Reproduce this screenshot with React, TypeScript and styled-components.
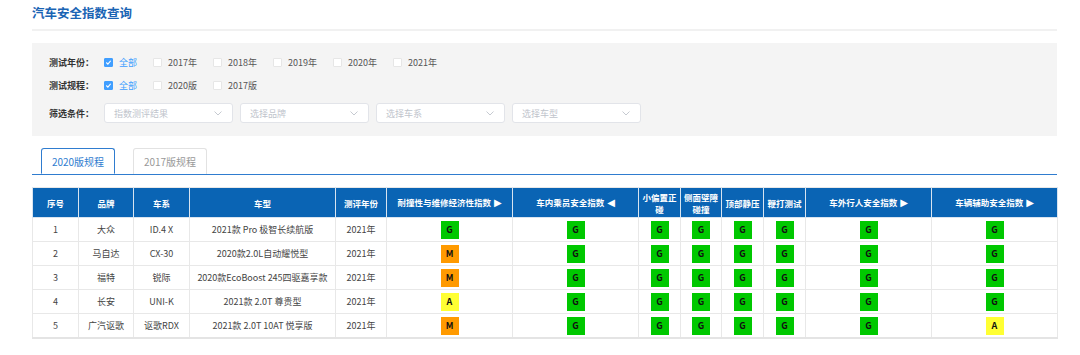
import React from "react";
import styled, { createGlobalStyle } from "styled-components";

const Colors = {
  title: "#1a64b4",
  blue: "#409eff",
  tabBlue: "#2f7ccf",
  header: "#0a64b4",
  panel: "#f4f4f4",
  text: "#555",
  label: "#333",
  border: "#e8e8e8",
  placeholder: "#c0c4cc",
};

const GlobalStyle = createGlobalStyle`
  body {
    margin: 0;
    background: #fff;
    font-family: "Noto Sans CJK SC", "Microsoft YaHei", sans-serif;
  }
`;

const Page = styled.div`
  width: 1025px;
  padding-left: 32px;
`;

const Title = styled.h1`
  margin: 0;
  font-size: 12.5px;
  line-height: 25px;
  font-weight: 700;
  color: ${Colors.title};
`;

const Divider = styled.div`
  margin-top: 4px;
  height: 2px;
  background: #f1f1f1;
`;

const FilterPanel = styled.div`
  margin-top: 12px;
  background: ${Colors.panel};
  padding: 12px 0 13px 17px;
  display: flex;
  flex-direction: column;
  gap: 9px;
`;

const FilterRow = styled.div<{ $top?: number }>`
  display: flex;
  align-items: center;
  min-height: 14px;
  margin-top: ${(p) => p.$top ?? 0}px;
`;

const FilterLabel = styled.span`
  width: 55px;
  font-size: 9px;
  font-weight: 700;
  color: ${Colors.label};
`;

const CheckItem = styled.label<{ $active?: boolean }>`
  display: flex;
  align-items: center;
  gap: 6px;
  margin-right: 16px;
  font-size: 9px;
  color: ${(p) => (p.$active ? Colors.blue : Colors.text)};
`;

const Box = styled.span<{ $checked?: boolean }>`
  width: 9px;
  height: 9px;
  border-radius: 1px;
  box-sizing: border-box;
  background: ${(p) => (p.$checked ? Colors.blue : "#fff")};
  border: 1px solid ${(p) => (p.$checked ? Colors.blue : "#e6e6e6")};
  display: flex;
  align-items: center;
  justify-content: center;
`;

const SelectRow = styled.div`
  display: flex;
  gap: 7px;
`;

const SelectBox = styled.div`
  width: 129px;
  height: 20px;
  box-sizing: border-box;
  background: #fff;
  border: 1px solid #e2e4e9;
  border-radius: 3px;
  display: flex;
  align-items: center;
  justify-content: space-between;
  padding: 0 10px 0 9px;
  font-size: 9px;
  color: ${Colors.placeholder};
`;

const Tabs = styled.div`
  margin-top: 12px;
  display: flex;
  gap: 18px;
  padding-left: 9px;
  border-bottom: 1px solid ${Colors.tabBlue};
  height: 26px;
`;

const Tab = styled.div<{ $active?: boolean }>`
  width: 74px;
  height: 26px;
  box-sizing: border-box;
  border: 1px solid ${(p) => (p.$active ? Colors.tabBlue : "#e2e2e2")};
  border-bottom: ${(p) => (p.$active ? "1px solid #fff" : "none")};
  border-radius: 3px 3px 0 0;
  background: #fff;
  display: flex;
  align-items: center;
  justify-content: center;
  font-size: 10px;
  color: ${(p) => (p.$active ? Colors.tabBlue : "#999")};
`;

const Table = styled.table`
  margin-top: 12px;
  width: 1025px;
  border-collapse: collapse;
  table-layout: fixed;
  border: 1px solid ${Colors.border};
  border-bottom: 2px solid #e4e4e4;
`;

const Th = styled.th`
  background: ${Colors.header};
  color: #fff;
  font-size: 8.5px;
  font-weight: 700;
  height: 29px;
  padding: 0 3px;
  line-height: 12px;
  border: 1px solid #d8e4f0;
  border-top: none;
`;

const Td = styled.td`
  height: 23px;
  padding: 0;
  text-align: center;
  font-size: 9px;
  color: #444;
  border: 1px solid ${Colors.border};
`;

const Arrow = styled.span`
  font-family: "DejaVu Sans", sans-serif;
  font-size: 10px;
  margin-left: 3px;
`;

const Badge = styled.span<{ $grade: string }>`
  display: inline-flex;
  align-items: center;
  justify-content: center;
  width: 18px;
  height: 18px;
  vertical-align: middle;
  font-size: 9px;
  font-weight: 700;
  color: #111;
  background: ${(p) =>
    p.$grade === "G" ? "#00c800" : p.$grade === "M" ? "#ff9a00" : "#ffff33"};
`;

const Check = () => (
  <svg width="7" height="7" viewBox="0 0 8 8">
    <polyline points="1.5,4 3.3,5.8 6.5,2" fill="none" stroke="#fff" strokeWidth="1.3" />
  </svg>
);

const Chevron = () => (
  <svg width="8" height="5" viewBox="0 0 8 5">
    <polyline points="0.5,0.5 4,4 7.5,0.5" fill="none" stroke="#c0c4cc" strokeWidth="0.9" />
  </svg>
);

const columns: { title: React.ReactNode; width: number }[] = [
  { title: "序号", width: 46 },
  { title: "品牌", width: 55 },
  { title: "车系", width: 56 },
  { title: "车型", width: 146 },
  { title: "测评年份", width: 51 },
  { title: <>耐撞性与维修经济性指数<Arrow>▶</Arrow></>, width: 126 },
  { title: <>车内乘员安全指数<Arrow>◀</Arrow></>, width: 126 },
  { title: "小偏置正碰", width: 42 },
  { title: "侧面壁障碰撞", width: 41 },
  { title: "顶部静压", width: 42 },
  { title: "鞭打测试", width: 42 },
  { title: <>车外行人安全指数<Arrow>▶</Arrow></>, width: 126 },
  { title: <>车辆辅助安全指数<Arrow>▶</Arrow></>, width: 126 },
];

const rows = [
  { brand: "大众", series: "ID.4 X", model: "2021款 Pro 极智长续航版", grades: "GGGGGGGG" },
  { brand: "马自达", series: "CX-30", model: "2020款2.0L自动耀悦型", grades: "MGGGGGGG" },
  { brand: "福特", series: "锐际", model: "2020款EcoBoost 245四驱嘉享款", grades: "MGGGGGGG" },
  { brand: "长安", series: "UNI-K", model: "2021款 2.0T 尊贵型", grades: "AGGGGGGG" },
  { brand: "广汽讴歌", series: "讴歌RDX", model: "2021款 2.0T 10AT 悦享版", grades: "MGGGGGGA" },
];

const years = ["2017年", "2018年", "2019年", "2020年", "2021年"];
const selects = ["指数测评结果", "选择品牌", "选择车系", "选择车型"];

export default function App() {
  return (
    <Page>
      <GlobalStyle />
      <Title>汽车安全指数查询</Title>
      <Divider />
      <FilterPanel>
        <FilterRow>
          <FilterLabel>测试年份：</FilterLabel>
          <CheckItem $active>
            <Box $checked><Check /></Box>全部
          </CheckItem>
          {years.map((y) => (
            <CheckItem key={y}>
              <Box />{y}
            </CheckItem>
          ))}
        </FilterRow>
        <FilterRow>
          <FilterLabel>测试规程：</FilterLabel>
          <CheckItem $active>
            <Box $checked><Check /></Box>全部
          </CheckItem>
          <CheckItem><Box />2020版</CheckItem>
          <CheckItem><Box />2017版</CheckItem>
        </FilterRow>
        <FilterRow $top={2}>
          <FilterLabel>筛选条件：</FilterLabel>
          <SelectRow>
            {selects.map((s) => (
              <SelectBox key={s}>
                {s}
                <Chevron />
              </SelectBox>
            ))}
          </SelectRow>
        </FilterRow>
      </FilterPanel>
      <Tabs>
        <Tab $active>2020版规程</Tab>
        <Tab>2017版规程</Tab>
      </Tabs>
      <Table>
        <colgroup>
          {columns.map((c, i) => (
            <col key={i} style={{ width: c.width }} />
          ))}
        </colgroup>
        <thead>
          <tr>
            {columns.map((c, i) => (
              <Th key={i}>{c.title}</Th>
            ))}
          </tr>
        </thead>
        <tbody>
          {rows.map((r, i) => (
            <tr key={i}>
              <Td>{i + 1}</Td>
              <Td>{r.brand}</Td>
              <Td>{r.series}</Td>
              <Td>{r.model}</Td>
              <Td>2021年</Td>
              {r.grades.split("").map((g, j) => (
                <Td key={j}>
                  <Badge $grade={g}>{g}</Badge>
                </Td>
              ))}
            </tr>
          ))}
        </tbody>
      </Table>
    </Page>
  );
}
